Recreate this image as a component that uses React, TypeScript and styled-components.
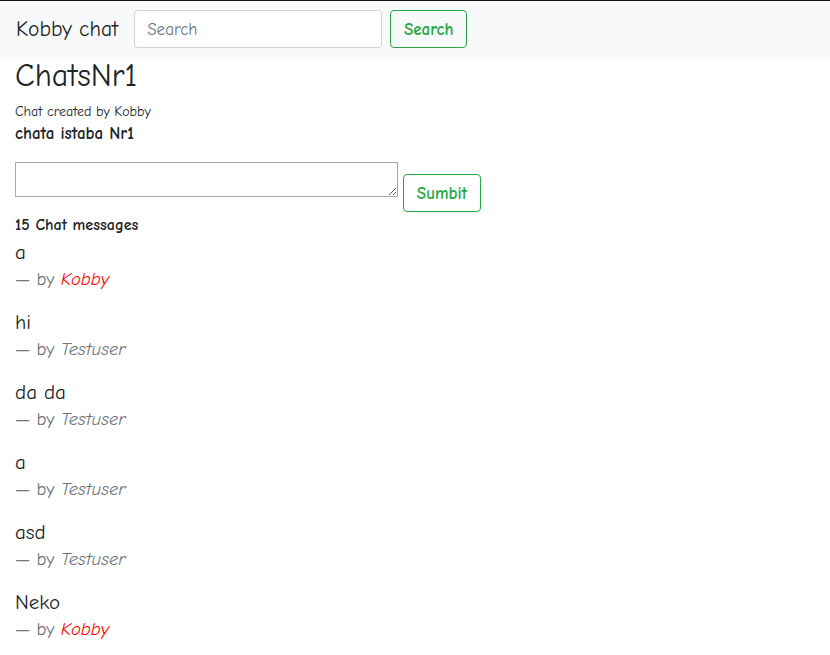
import React from "react";
import styled, { createGlobalStyle } from "styled-components";

const GlobalStyle = createGlobalStyle`
  body {
    margin: 0;
    background: #fff;
    color: #212529;
    font-family: "Comic Sans MS", "Comic Neue", "DejaVu Sans", sans-serif;
  }
`;

const Navbar = styled.nav`
  display: flex;
  align-items: center;
  height: 57px;
  box-sizing: border-box;
  padding: 0 16px;
  background: #f8f9fa;
  border-top: 1px solid #111;
`;

const Brand = styled.span`
  font-size: 21.5px;
  margin-right: 16px;
`;

const SearchInput = styled.input`
  width: 248px;
  height: 38px;
  box-sizing: border-box;
  padding: 6px 12px;
  font-family: inherit;
  font-size: 17px;
  border: 1px solid #ced4da;
  border-radius: 4px;
  background: #fff;
  margin-right: 8px;
  &::placeholder {
    color: #6c757d;
  }
`;

const OutlineButton = styled.button`
  height: 38px;
  width: 77px;
  box-sizing: border-box;
  padding: 0;
  font-family: inherit;
  font-size: 17px;
  font-weight: bold;
  color: #28a745;
  background: transparent;
  border: 1px solid #28a745;
  border-radius: 4px;
`;

const Main = styled.main`
  padding: 0 15px;
`;

const Title = styled.h2`
  font-size: 32px;
  font-weight: normal;
  line-height: 38px;
  margin: 0 0 6px;
`;

const Creator = styled.div`
  font-size: 14px;
  line-height: 21px;
`;

const Description = styled.div`
  font-size: 17px;
  font-weight: bold;
  line-height: 24px;
`;

const Form = styled.form`
  display: flex;
  align-items: flex-start;
  gap: 5px;
  margin: 16px 0 1px;
`;

const TextBox = styled.textarea`
  width: 383px;
  height: 35px;
  box-sizing: border-box;
  border: 1px solid #aaa;
  font-family: inherit;
`;

const SubmitButton = styled(OutlineButton)`
  margin-top: 12px;
  width: 78px;
`;

const Count = styled.div`
  font-size: 16px;
  font-weight: bold;
  line-height: 24px;
`;

const Message = styled.blockquote`
  margin: 0 0 16px;
`;

const Text = styled.p`
  margin: 0;
  font-size: 21px;
  line-height: 30px;
`;

const Footer = styled.footer`
  font-size: 18.5px;
  line-height: 24px;
  color: #6c757d;
`;

const Author = styled.cite<{ $owner: boolean }>`
  color: ${(p) => (p.$owner ? "#ff0000" : "#6c757d")};
`;

const messages = [
  { text: "a", by: "Kobby" },
  { text: "hi", by: "Testuser" },
  { text: "da da", by: "Testuser" },
  { text: "a", by: "Testuser" },
  { text: "asd", by: "Testuser" },
  { text: "Neko", by: "Kobby" },
  { text: "hello", by: "Testuser" },
  { text: "ok", by: "Kobby" },
];

export default function App() {
  return (
    <>
      <GlobalStyle />
      <Navbar>
        <Brand>Kobby chat</Brand>
        <SearchInput placeholder="Search" />
        <OutlineButton>Search</OutlineButton>
      </Navbar>
      <Main>
        <Title>ChatsNr1</Title>
        <Creator>Chat created by Kobby</Creator>
        <Description>chata istaba Nr1</Description>
        <Form onSubmit={(e) => e.preventDefault()}>
          <TextBox />
          <SubmitButton>Sumbit</SubmitButton>
        </Form>
        <Count>15 Chat messages</Count>
        {messages.map((m, i) => (
          <Message key={i}>
            <Text>{m.text}</Text>
            <Footer>
              — by <Author $owner={m.by === "Kobby"}>{m.by}</Author>
            </Footer>
          </Message>
        ))}
      </Main>
    </>
  );
}
